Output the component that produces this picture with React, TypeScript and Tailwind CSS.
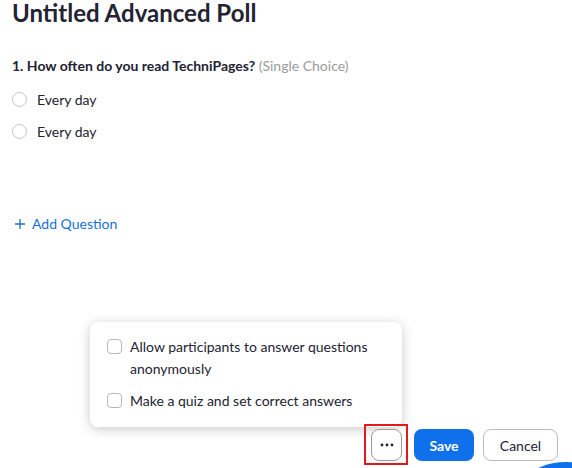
import React from 'react';

const options = ['Every day', 'Every day'];

export default function App() {
  return (
    <div className="relative w-[572px] h-[468px] overflow-hidden bg-white font-['Lato',sans-serif] text-[#232333]">
      <div className="px-3">
        <h1 className="text-[24px] leading-[24px] font-bold pt-[1px]">Untitled Advanced Poll</h1>

        <div className="mt-[31px] text-[14px] leading-[20px]">
          <span className="font-bold">1. How often do you read TechniPages?</span>{' '}
          <span className="text-[#9b9b9b]">(Single Choice)</span>
        </div>

        <div className="mt-[7px] flex flex-col">
          {options.map((o, i) => (
            <label key={i} className="flex items-center h-[32px] text-[14px]">
              <span className="w-[15px] h-[15px] rounded-full border border-[#c4c4c4] bg-white" />
              <span className="ml-[10px]">{o}</span>
            </label>
          ))}
        </div>

        <button className="mt-[66px] flex items-center text-[14px] text-[#1a6fd6]">
          <svg width="10" height="10" viewBox="0 0 10 10" className="ml-[3px]">
            <path d="M5 0v10M0 5h10" stroke="currentColor" strokeWidth="1.3" fill="none" />
          </svg>
          <span className="ml-[7px]">Add Question</span>
        </button>
      </div>

      {/* more options menu */}
      <div className="absolute left-[90px] top-[322px] w-[312px] rounded-[8px] bg-white shadow-[0_2px_12px_rgba(0,0,0,0.22)] pt-[14px] pb-[15px] pl-[17px] pr-3 text-[14px] leading-[22px]">
        <div className="flex items-start">
          <span className="mt-[3px] w-[15px] h-[15px] shrink-0 rounded-[4px] border border-[#b8b8b8]" />
          <span className="ml-[8px]">Allow participants to answer questions anonymously</span>
        </div>
        <div className="flex items-start mt-[10px]">
          <span className="mt-[3px] w-[15px] h-[15px] shrink-0 rounded-[4px] border border-[#b8b8b8]" />
          <span className="ml-[8px]">Make a quiz and set correct answers</span>
        </div>
      </div>

      <div className="absolute left-[498px] top-[462px] w-[136px] h-[136px] rounded-full bg-[#0e71eb]" />

      <div className="absolute right-[14px] bottom-[7px] flex items-center gap-[12px] text-[14px]">
        <div className="relative">
          <button className="w-[31px] h-[32px] rounded-[8px] border border-[#9a9a9a] bg-white flex items-center justify-center">
            <svg width="14" height="4" viewBox="0 0 14 4">
              <circle cx="2" cy="2" r="1.4" fill="#232333" />
              <circle cx="7" cy="2" r="1.4" fill="#232333" />
              <circle cx="12" cy="2" r="1.4" fill="#232333" />
            </svg>
          </button>
          <div className="absolute -left-[7px] -top-[5px] w-[44px] h-[41px] border-2 border-[#e11a1a]" />
        </div>
        <button className="w-[60px] h-[32px] rounded-[8px] bg-[#0e71eb] text-white font-bold">Save</button>
        <button className="ml-[-3px] w-[75px] h-[32px] rounded-[8px] border border-[#bdbdbd] bg-white">Cancel</button>
      </div>
    </div>
  );
}
